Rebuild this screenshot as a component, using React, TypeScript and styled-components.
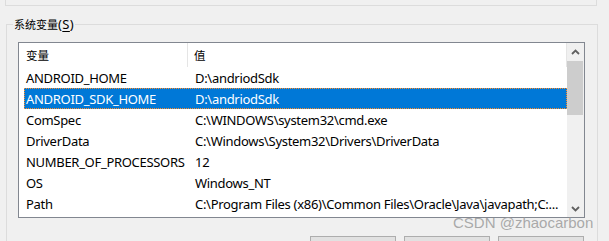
import React from 'react'
import styled, { createGlobalStyle } from 'styled-components'

const GlobalStyle = createGlobalStyle`
  html, body {
    margin: 0;
    padding: 0;
    background: #f0f0f0;
    overflow: hidden;
  }
  body {
    font-family: "Noto Sans", "Noto Sans CJK SC", sans-serif;
    font-size: 13px;
    letter-spacing: -0.3px;
    color: #000;
  }
`

const Page = styled.div`
  position: relative;
  width: 609px;
  height: 241px;
  overflow: hidden;
`

const TopGroup = styled.div`
  box-sizing: border-box;
  width: 592px;
  height: 6px;
  margin-left: 5px;
  border: 1px solid #dcdcdc;
  border-top: none;
`

const Group = styled.fieldset`
  box-sizing: border-box;
  width: 592px;
  margin: 8px 0 0 6px;
  padding: 0 0 0 11px;
  border: 1px solid #dcdcdc;
  min-inline-size: 0;
`

const Legend = styled.legend`
  margin-left: -5px;
  padding: 0 1px;
  line-height: 20px;
  height: 20px;
  letter-spacing: 0.4px;
`

const Cjk = styled.span<{ $size?: number }>`
  font-family: "Noto Sans CJK SC", sans-serif;
  font-size: ${(p) => p.$size ?? 11.5}px;
  letter-spacing: 0;
`

const Mnemonic = styled.span`
  text-decoration: underline;
  text-underline-offset: 2px;
`

const ListBox = styled.div`
  box-sizing: border-box;
  display: flex;
  width: 567px;
  height: 176px;
  margin-top: 8px;
  background: #fff;
  border: 1px solid #828790;
`

const View = styled.div`
  flex: 1;
  display: flex;
  flex-direction: column;
  overflow: hidden;
`

const Header = styled.div`
  display: flex;
  height: 24px;
  align-items: center;
  flex-shrink: 0;
`

const HeadCell = styled.div<{ $width?: number; $pad: number }>`
  box-sizing: border-box;
  height: 24px;
  display: flex;
  align-items: center;
  padding-left: ${(p) => p.$pad}px;
  ${(p) => (p.$width ? `width: ${p.$width}px;` : 'flex: 1;')}
  border-right: 1px solid #e5e5e5;
`

const Row = styled.div<{ $selected?: boolean }>`
  box-sizing: border-box;
  display: flex;
  align-items: center;
  height: 21px;
  margin-left: 5px;
  flex-shrink: 0;
  white-space: nowrap;
  background: ${(p) => (p.$selected ? '#0078d7' : 'transparent')};
  color: ${(p) => (p.$selected ? '#fff' : '#000')};
  border: 1px dotted ${(p) => (p.$selected ? '#ff8c28' : 'transparent')};
`

const NameCell = styled.div`
  box-sizing: border-box;
  width: 163px;
  padding-left: 1px;
  overflow: hidden;
`

const ValueCell = styled.div`
  flex: 1;
  padding-left: 7px;
  overflow: hidden;
`

const ScrollBar = styled.div`
  width: 17px;
  display: flex;
  flex-direction: column;
  background: #f0f0f0;
`

const Arrow = styled.div`
  height: 17px;
  display: flex;
  align-items: center;
  justify-content: center;
  flex-shrink: 0;
`

const Thumb = styled.div`
  height: 54px;
  margin: 1px 1px 0 0;
  background: #cdcdcd;
`

const Spacer = styled.div`
  flex: 1;
`

const Buttons = styled.div`
  display: flex;
  gap: 8px;
  justify-content: flex-end;
  width: 566px;
  margin-top: 18px;
`

const Button = styled.div`
  box-sizing: border-box;
  width: 86px;
  height: 23px;
  background: #e1e1e1;
  border: 1px solid #adadad;
`

const Watermark = styled.div`
  position: absolute;
  left: 453px;
  top: 214px;
  font-family: "Liberation Sans", Arial, sans-serif;
  font-size: 15px;
  letter-spacing: 0;
  color: rgba(150, 150, 150, 0.8);
  white-space: nowrap;
`

const Chevron = ({ up }: { up?: boolean }) => (
  <svg width="9" height="6" viewBox="0 0 9 6">
    <polyline
      points={up ? '1,5 4.5,1.5 8,5' : '1,1 4.5,4.5 8,1'}
      fill="none"
      stroke="#606060"
      strokeWidth="1.8"
    />
  </svg>
)

const vars: [string, string][] = [
  ['ANDROID_HOME', 'D:\\andriodSdk'],
  ['ANDROID_SDK_HOME', 'D:\\andriodSdk'],
  ['ComSpec', 'C:\\WINDOWS\\system32\\cmd.exe'],
  ['DriverData', 'C:\\Windows\\System32\\Drivers\\DriverData'],
  ['NUMBER_OF_PROCESSORS', '12'],
  ['OS', 'Windows_NT'],
  ['Path', 'C:\\Program Files (x86)\\Common Files\\Oracle\\Java\\javapath;C:...'],
]

export default function App() {
  return (
    <Page>
      <GlobalStyle />
      <TopGroup />
      <Group>
        <Legend>
          <Cjk $size={11}>系统变量</Cjk>(<Mnemonic>S</Mnemonic>)
        </Legend>
        <ListBox>
          <View>
            <Header>
              <HeadCell $width={169} $pad={7}>
                <Cjk>变量</Cjk>
              </HeadCell>
              <HeadCell $pad={6}>
                <Cjk>值</Cjk>
              </HeadCell>
            </Header>
            {vars.map(([name, value], i) => (
              <Row key={name} $selected={i === 1}>
                <NameCell>{name}</NameCell>
                <ValueCell>{value}</ValueCell>
              </Row>
            ))}
          </View>
          <ScrollBar>
            <Arrow>
              <Chevron up />
            </Arrow>
            <Thumb />
            <Spacer />
            <Arrow>
              <Chevron />
            </Arrow>
          </ScrollBar>
        </ListBox>
        <Buttons>
          <Button />
          <Button />
          <Button />
        </Buttons>
      </Group>
      <Watermark>CSDN @zhaocarbon</Watermark>
    </Page>
  )
}
